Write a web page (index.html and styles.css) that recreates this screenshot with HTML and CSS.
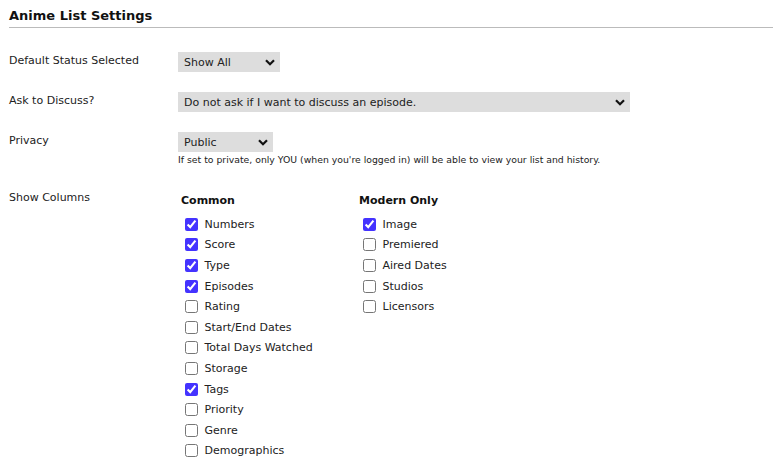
FILE: index.html
```html
<!DOCTYPE html>
<html lang="en">
<head>
    <meta charset="UTF-8">
    <title>Anime List Settings</title>
    <link rel="stylesheet" href="styles.css">
</head>
<body>
    <h2 class="section-title">Anime List Settings</h2>

    <div class="setting-row">
        <label class="setting-label">Default Status Selected</label>
        <div class="setting-control">
            <select class="select status-select">
                <option>Show All</option>
            </select>
        </div>
    </div>

    <div class="setting-row">
        <label class="setting-label">Ask to Discuss?</label>
        <div class="setting-control">
            <select class="select discuss-select">
                <option>Do not ask if I want to discuss an episode.</option>
            </select>
        </div>
    </div>

    <div class="setting-row">
        <label class="setting-label">Privacy</label>
        <div class="setting-control">
            <select class="select privacy-select">
                <option>Public</option>
            </select>
            <div class="note">If set to private, only YOU (when you're logged in) will be able to view your list and history.</div>
        </div>
    </div>

    <div class="setting-row columns-row">
        <label class="setting-label">Show Columns</label>
        <div class="setting-control column-groups">
            <div class="column-group">
                <div class="group-title">Common</div>
                <label class="check"><input type="checkbox" checked> Numbers</label>
                <label class="check"><input type="checkbox" checked> Score</label>
                <label class="check"><input type="checkbox" checked> Type</label>
                <label class="check"><input type="checkbox" checked> Episodes</label>
                <label class="check"><input type="checkbox"> Rating</label>
                <label class="check"><input type="checkbox"> Start/End Dates</label>
                <label class="check"><input type="checkbox"> Total Days Watched</label>
                <label class="check"><input type="checkbox"> Storage</label>
                <label class="check"><input type="checkbox" checked> Tags</label>
                <label class="check"><input type="checkbox"> Priority</label>
                <label class="check"><input type="checkbox"> Genre</label>
                <label class="check"><input type="checkbox"> Demographics</label>
            </div>
            <div class="column-group">
                <div class="group-title">Modern Only</div>
                <label class="check"><input type="checkbox" checked> Image</label>
                <label class="check"><input type="checkbox"> Premiered</label>
                <label class="check"><input type="checkbox"> Aired Dates</label>
                <label class="check"><input type="checkbox"> Studios</label>
                <label class="check"><input type="checkbox"> Licensors</label>
            </div>
        </div>
    </div>
</body>
</html>
```

FILE: styles.css
```css
/* General styles */
body {
    font-family: "DejaVu Sans", Verdana, sans-serif;
    font-size: 11px;
    color: #222;
    background: #fff;
    margin: 0;
    padding: 0 0 0 9px;
}

.section-title {
    font-size: 13px;
    font-weight: bold;
    color: #111;
    margin: 0;
    padding: 8px 0 4px;
    border-bottom: 1px solid #bbb;
}

/* Setting rows */
.setting-row {
    display: grid;
    grid-template-columns: 169px 1fr;
    margin-top: 24px;
}

.setting-row + .setting-row {
    margin-top: 20px;
}

.setting-label {
    padding-top: 2px;
}

.select {
    appearance: none;
    -webkit-appearance: none;
    font-family: inherit;
    font-size: 11px;
    color: #222;
    height: 20px;
    border: none;
    border-radius: 0;
    background-color: #ddd;
    background-image: url("data:image/svg+xml;utf8,<svg xmlns='http://www.w3.org/2000/svg' width='10' height='7' viewBox='0 0 10 7'><path d='M1 1.2 L5 5.2 L9 1.2' fill='none' stroke='%23111' stroke-width='2.2'/></svg>");
    background-repeat: no-repeat;
    background-position: right 5px center;
    padding: 0 20px 0 6px;
    margin: 0;
    display: block;
}

.status-select { width: 102px; }
.discuss-select { width: 452px; }
.privacy-select { width: 95px; }

.note {
    font-size: 9.3px;
    margin-top: 2px;
}

/* Columns checkboxes */
.setting-row.columns-row {
    margin-top: 26px;
}

.columns-row .setting-label {
    padding-top: 0;
}

.column-groups {
    display: flex;
    padding-left: 3px;
}

.column-group {
    width: 178px;
}

.group-title {
    font-weight: bold;
    color: #111;
    margin: 3px 0 7px;
}

.check {
    display: flex;
    align-items: center;
    height: 20.6px;
    white-space: pre;
}

.check input {
    width: 13px;
    height: 13px;
    margin: 0 3px 0 4px;
    accent-color: #4433ff;
}
```
